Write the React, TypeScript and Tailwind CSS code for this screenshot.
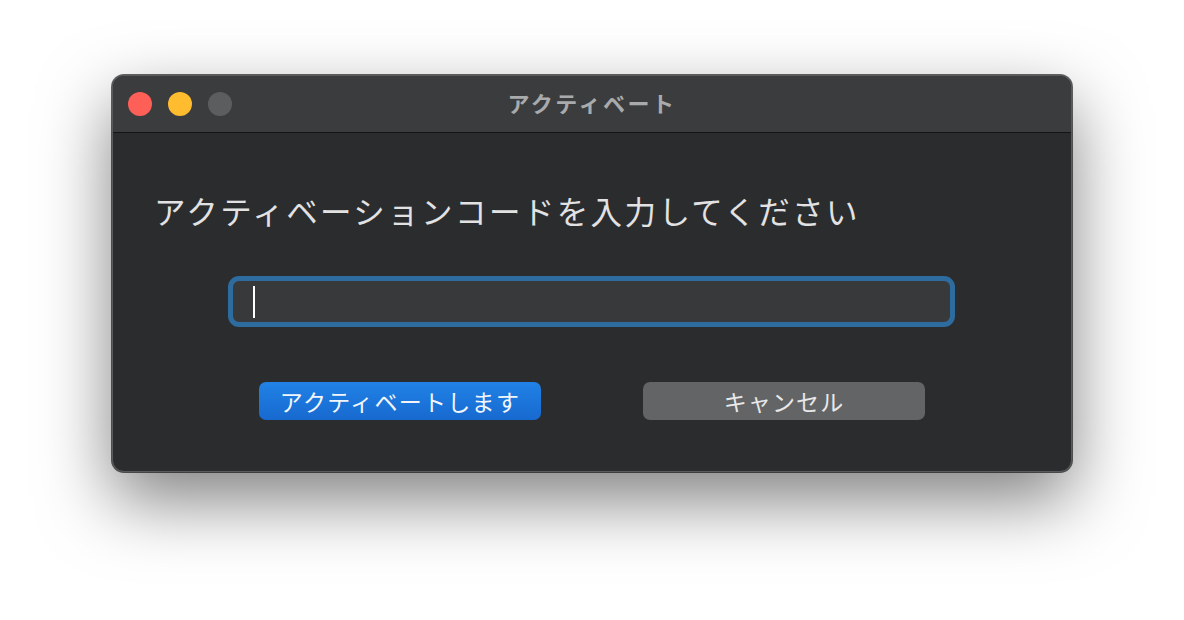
import React from "react";

export default function App() {
  const font = { fontFamily: '"Noto Sans CJK JP", "Noto Sans", sans-serif' };
  return (
    <div className="w-[1184px] h-[620px] bg-white overflow-hidden" style={font}>
      <div className="pt-[75px] pl-[112px]">
        <div className="w-[960px] h-[397px] rounded-[12px] bg-[#2b2c2e] border border-[#5a5b5d] shadow-[0_28px_70px_rgba(0,0,0,0.5),0_0_0_1px_rgba(0,0,0,0.6)] overflow-hidden flex flex-col">
          <div className="relative h-[57px] bg-[#3b3c3e] border-b border-[#141414] flex items-center px-[15px] gap-[16px] shrink-0">
            <div className="w-[24px] h-[24px] rounded-full bg-[#fe5f57]" />
            <div className="w-[24px] h-[24px] rounded-full bg-[#febc2e]" />
            <div className="w-[24px] h-[24px] rounded-full bg-[#5c5d5f]" />
            <div className="absolute inset-0 pb-[4px] flex items-center justify-center text-[22px] font-bold text-[#a9aaab] tracking-[2.5px] pointer-events-none">
              アクティベート
            </div>
          </div>
          <div className="flex flex-col pt-[56px]">
            <div className="pl-[41px] text-[31.5px] leading-[42px] text-[#e2e2e3] tracking-[2.4px]">
              アクティベーションコードを入力してください
            </div>
            <div className="pl-[115px] pt-[45px]">
              <div className="w-[727px] h-[51px] rounded-[11px] border-[5px] border-[#2e6b9e] bg-[#38393b] flex items-center pl-[20px]">
                <div className="w-[2px] h-[32px] bg-white" />
              </div>
            </div>
            <div className="flex pt-[55px] pl-[146px] gap-[102px]">
              <div className="w-[282px] h-[38px] rounded-[7px] bg-gradient-to-b from-[#2182e6] to-[#1769cf] flex items-center justify-center text-[23px] text-[#f2f6fb] tracking-[1.3px]">
                アクティベートします
              </div>
              <div className="w-[282px] h-[38px] rounded-[7px] bg-[#636466] flex items-center justify-center text-[23px] text-[#e8e8e9] tracking-[1.1px]">
                キャンセル
              </div>
            </div>
          </div>
        </div>
      </div>
    </div>
  );
}
